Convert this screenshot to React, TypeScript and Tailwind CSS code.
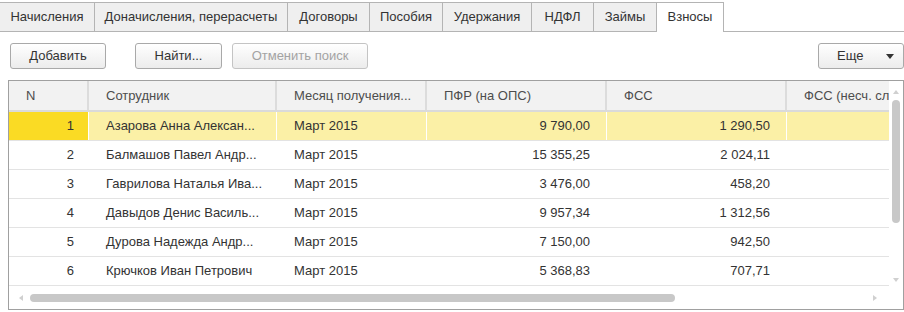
import React from "react";

const tabs = [
  { t: "Начисления", w: 95 },
  { t: "Доначисления, перерасчеты", w: 193 },
  { t: "Договоры", w: 82 },
  { t: "Пособия", w: 73 },
  { t: "Удержания", w: 89 },
  { t: "НДФЛ", w: 62 },
  { t: "Займы", w: 63 },
  { t: "Взносы", w: 67, active: true },
];

const rows = [
  ["1", "Азарова Анна Алексан...", "Март 2015", "9 790,00", "1 290,50"],
  ["2", "Балмашов Павел Андр...", "Март 2015", "15 355,25", "2 024,11"],
  ["3", "Гаврилова Наталья Ива...", "Март 2015", "3 476,00", "458,20"],
  ["4", "Давыдов Денис Василь...", "Март 2015", "9 957,34", "1 312,56"],
  ["5", "Дурова Надежда Андр...", "Март 2015", "7 150,00", "942,50"],
  ["6", "Крючков Иван Петрович", "Март 2015", "5 368,83", "707,71"],
];

const cols = "grid grid-cols-[80px_188px_150px_180px_180px_200px]";

function Btn({ children, disabled, w }: { children: React.ReactNode; disabled?: boolean; w: string }) {
  return (
    <div
      className={`${w} h-[26px] flex items-center justify-center rounded-[3px] border bg-gradient-to-b from-white to-[#ececec] text-[13px] ${
        disabled ? "text-[#a3a3a3] border-[#c4c4c4]" : "text-[#333] border-[#a9a9a9]"
      }`}
    >
      {children}
    </div>
  );
}

export default function App() {
  return (
    <div className="w-[904px] h-[312px] bg-white overflow-hidden text-[13px] text-[#333]" style={{ fontFamily: '"Liberation Sans", Arial, sans-serif' }}>
      {/* Tabs */}
      <div className="flex items-end h-[32px] border-b border-[#b4b4b4]">
        {tabs.map((t, i) => (
          <div
            key={i}
            style={{ width: t.w }}
            className={`flex items-center justify-center border-t border-r border-[#b4b4b4] ${
              t.active ? "bg-white h-[30px] -mb-px" : "bg-[#efefef] h-[29px]"
            }`}
          >
            <span className="-mt-[1px]">{t.t}</span>
          </div>
        ))}
      </div>

      {/* Toolbar */}
      <div className="flex items-center h-[26px] mt-[11px] pl-[10px]">
        <Btn w="w-[96px]">Добавить</Btn>
        <div className="w-[29px]" />
        <Btn w="w-[87px]">Найти...</Btn>
        <div className="w-[10px]" />
        <Btn w="w-[136px]" disabled>Отменить поиск</Btn>
        <div className="flex-1" />
        <div className="w-[86px] h-[26px] flex items-center rounded-[3px] border border-[#a9a9a9] bg-gradient-to-b from-white to-[#ececec]">
          <span className="ml-[18px] w-[40px]">Еще</span>
          <svg width="8" height="5" viewBox="0 0 8 5" className="ml-[9px]">
            <path d="M0 0H8L4 5Z" fill="#333" />
          </svg>
        </div>
      </div>

      {/* Table */}
      <div className="ml-[8px] mt-[11px] w-[896px] h-[230px] border border-[#a0a0a0] flex flex-col">
        <div className="flex flex-1 min-h-0">
          <div className="flex-1 overflow-hidden">
            {/* header */}
            <div className={`${cols} h-[31px] bg-[#f2f2f2] border-b-2 border-[#dadada] text-[#4d4d4d]`}>
              {["N", "Сотрудник", "Месяц получения...", "ПФР (на ОПС)", "ФСС", "ФСС (несч. сл..."].map((h, i) => (
                <div key={i} className="pl-[17px] flex items-center border-r-2 border-[#dcdcdc] whitespace-nowrap overflow-hidden">
                  <span>{h}</span>
                </div>
              ))}
            </div>
            {rows.map((r, ri) => {
              const sel = ri === 0;
              const cell = `flex items-center h-full border-r ${sel ? "border-white bg-[#fbf0a6]" : "border-transparent"}`;
              return (
                <div key={ri} className={`${cols} h-[29px] border-b border-[#e3e3e3]`}>
                  <div className={`${cell} justify-end pr-[14px] ${sel ? "!bg-[#fadb24]" : ""}`}>{r[0]}</div>
                  <div className={`${cell} pl-[17px] whitespace-nowrap`}>{r[1]}</div>
                  <div className={`${cell} pl-[17px]`}>{r[2]}</div>
                  <div className={`${cell} justify-end pr-[16px]`}>{r[3]}</div>
                  <div className={`${cell} justify-end pr-[16px]`}>{r[4]}</div>
                  <div className={`${cell}`}></div>
                </div>
              );
            })}
          </div>
          {/* vertical scrollbar */}
          <div className="w-[14px] flex flex-col items-center pt-[9px]">
            <svg width="6" height="4" viewBox="0 0 6 4">
              <path d="M0 4L3 0L6 4Z" fill="#d0d0d0" />
            </svg>
            <div className="mt-[6px] w-[8px] h-[123px] rounded-[4px] bg-[#c8c8c8]" />
            <div className="flex-1" />
            <svg width="6" height="4" viewBox="0 0 6 4" className="mb-[4px]">
              <path d="M0 0L3 4L6 0Z" fill="#d0d0d0" />
            </svg>
          </div>
        </div>
        {/* horizontal scrollbar */}
        <div className="h-[23px] flex items-center pr-[14px]">
          <svg width="4" height="6" viewBox="0 0 4 6" className="ml-[10px]">
            <path d="M4 0L0 3L4 6Z" fill="#d0d0d0" />
          </svg>
          <div className="ml-[7px] w-[645px] h-[8px] rounded-[4px] bg-[#c8c8c8]" />
          <div className="flex-1" />
          <svg width="4" height="6" viewBox="0 0 4 6" className="mr-[12px]">
            <path d="M0 0L4 3L0 6Z" fill="#d0d0d0" />
          </svg>
        </div>
      </div>
    </div>
  );
}
